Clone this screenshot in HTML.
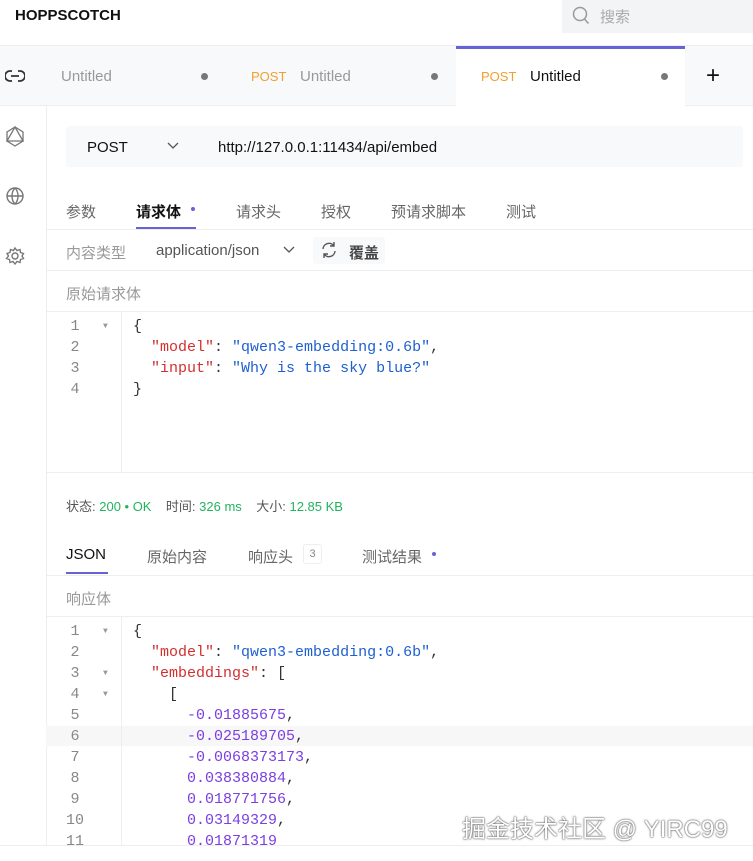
<!DOCTYPE html>
<html><head><meta charset="utf-8"><style>
*{box-sizing:border-box;margin:0;padding:0}
body{width:753px;height:861px;overflow:hidden;background:#fff;font-family:"Liberation Sans","Noto Sans CJK SC",sans-serif;color:#333;position:relative}
.a{position:absolute}
.mono{font-family:"Liberation Mono","DejaVu Sans Mono",monospace;font-size:15px}
.ln{position:absolute;left:46px;width:76px;text-align:center;color:#888;font-size:15px;padding-right:18px}
.code{position:absolute;left:133px;white-space:pre}
.k{color:#d32f2f}.s{color:#1e60d0}.n{color:#7b3fe0}
.arr{position:absolute;left:103px;font-size:8px;color:#999}
</style></head><body>
<div class="a" style="left:15px;top:7px;font-weight:bold;font-size:15px;color:#111">HOPPSCOTCH</div>
<div class="a" style="left:562px;top:0;width:191px;height:33px;background:#f3f4f6"></div>
<svg class="a" style="left:571px;top:6px" width="20" height="20" viewBox="0 0 20 20"><circle cx="9" cy="8" r="6.5" fill="none" stroke="#999" stroke-width="1.5"/><path d="M13.5 13l4 4.5" stroke="#999" stroke-width="1.5"/></svg>
<div class="a" style="left:600px;top:6px;font-size:15px;color:#aaa">搜索</div>
<div class="a" style="left:0;top:45px;width:753px;height:1px;background:#eee"></div>
<div class="a" style="left:0;top:46px;width:753px;height:60px;background:#f8f9fa"></div>
<div class="a" style="left:46px;top:106px;width:1px;height:755px;background:#eee"></div>
<div class="a" style="left:0;top:105px;width:753px;height:1px;background:#eee"></div>
<div class="a" style="left:456px;top:46px;width:229px;height:60px;background:#fff"></div>
<div class="a" style="left:456px;top:46px;width:229px;height:3px;background:#6663d6"></div>
<svg class="a" style="left:5px;top:67px" width="20" height="18" viewBox="0 0 20 18"><path d="M7 4H5a5 5 0 0 0 0 10h2M13 4h2a5 5 0 0 1 0 10h-2M6 9h8" fill="none" stroke="#333" stroke-width="1.8"/></svg>
<div class="a" style="left:61px;top:68px;font-size:15px;color:#999">Untitled</div>
<div class="a" style="left:201px;top:73px;width:7px;height:7px;border-radius:50%;background:#777"></div>
<div class="a" style="left:251px;top:69px;font-size:13px;color:#f0a030">POST</div>
<div class="a" style="left:300px;top:68px;font-size:15px;color:#999">Untitled</div>
<div class="a" style="left:431px;top:73px;width:7px;height:7px;border-radius:50%;background:#777"></div>
<div class="a" style="left:481px;top:69px;font-size:13px;color:#f0a030">POST</div>
<div class="a" style="left:530px;top:68px;font-size:15px;color:#111">Untitled</div>
<div class="a" style="left:661px;top:73px;width:7px;height:7px;border-radius:50%;background:#777"></div>
<div class="a" style="left:706px;top:62px;font-size:24px;color:#111">+</div>
<svg class="a" style="left:4px;top:125px" width="22" height="22" viewBox="0 0 22 22" fill="none" stroke="#777" stroke-width="1.3"><path d="M11 2L19 16H3Z"/><path d="M11 2L3 7v9l8 5 8-5V7z"/></svg>
<svg class="a" style="left:4px;top:185px" width="22" height="22" viewBox="0 0 22 22" fill="none" stroke="#777" stroke-width="1.4"><circle cx="11" cy="11" r="8"/><path d="M3 11h16M11 3c-4 4-4 12 0 16M11 3c4 4 4 12 0 16"/></svg>
<svg class="a" style="left:4px;top:245px" width="22" height="22" viewBox="0 0 22 22" fill="none" stroke="#777" stroke-width="1.4"><circle cx="11" cy="11" r="3"/><path d="M11 3l2 2.5 3-1 .5 3 3 1-1.5 2.5 1.5 2.5-3 1-.5 3-3-1-2 2.5-2-2.5-3 1-.5-3-3-1L4.5 11 3 8.5l3-1 .5-3 3 1z"/></svg>
<div class="a" style="left:66px;top:126px;width:677px;height:41px;background:#f8f9fa;border-radius:3px"></div>
<div class="a" style="left:87px;top:139px;font-size:15px;color:#111">POST</div>
<svg class="a" style="left:166px;top:141px" width="14" height="10"><path d="M2 2l5 5 5-5" fill="none" stroke="#555" stroke-width="1.3"/></svg>
<div class="a" style="left:218px;top:139px;font-size:15px;color:#111">http://127.0.0.1:11434/api/embed</div>
<div class="a" style="left:66px;top:201px;font-size:15px;color:#666">参数</div>
<div class="a" style="left:136px;top:201px;font-size:15px;color:#111;font-weight:bold">请求体</div>
<div class="a" style="left:191px;top:207px;width:4px;height:4px;border-radius:50%;background:#6663d6"></div>
<div class="a" style="left:136px;top:227px;width:60px;height:2px;background:#6663d6"></div>
<div class="a" style="left:236px;top:201px;font-size:15px;color:#666">请求头</div>
<div class="a" style="left:321px;top:201px;font-size:15px;color:#666">授权</div>
<div class="a" style="left:391px;top:201px;font-size:15px;color:#666">预请求脚本</div>
<div class="a" style="left:506px;top:201px;font-size:15px;color:#666">测试</div>
<div class="a" style="left:47px;top:229px;width:706px;height:1px;background:#eee"></div>
<div class="a" style="left:66px;top:242px;font-size:15px;color:#999">内容类型</div>
<div class="a" style="left:156px;top:242px;font-size:15px;color:#555">application/json</div>
<svg class="a" style="left:283px;top:245px" width="12" height="10"><path d="M1 2l5 5 5-5" fill="none" stroke="#555" stroke-width="1.3"/></svg>
<div class="a" style="left:313px;top:237px;width:72px;height:27px;background:#f8f9fa;border-radius:3px"></div>
<svg class="a" style="left:319px;top:240px" width="20" height="20" viewBox="0 0 20 20" fill="none" stroke="#555" stroke-width="1.4"><path d="M4 9a6 6 0 0 1 11-3M16 11a6 6 0 0 1-11 3M15 2v4h-4M5 18v-4h4"/></svg>
<div class="a" style="left:349px;top:242px;font-size:15px;color:#444;font-weight:bold">覆盖</div>
<div class="a" style="left:47px;top:270px;width:706px;height:1px;background:#eee"></div>
<div class="a" style="left:66px;top:283px;font-size:15px;color:#999">原始请求体</div>
<div class="a" style="left:47px;top:311px;width:706px;height:1px;background:#eee"></div>
<div class="a" style="left:121px;top:312px;width:1px;height:160px;background:#eee"></div>
<div class="a" style="left:47px;top:472px;width:706px;height:1px;background:#eee"></div>
<div class="mono">
<div class="ln" style="top:318px">1</div><div class="arr" style="top:322px">▼</div>
<div class="ln" style="top:339px">2</div><div class="ln" style="top:360px">3</div><div class="ln" style="top:381px">4</div>
<div class="code" style="top:318px">{</div>
<div class="code" style="top:339px">  <span class="k">"model"</span>: <span class="s">"qwen3-embedding:0.6b"</span>,</div>
<div class="code" style="top:360px">  <span class="k">"input"</span>: <span class="s">"Why is the sky blue?"</span></div>
<div class="code" style="top:381px">}</div>
</div>
<div class="a" style="left:66px;top:496px;font-size:13px;color:#555">状态: <span style="color:#22b35e">200 • OK</span>&nbsp;&nbsp;&nbsp;&nbsp;时间: <span style="color:#22b35e">326 ms</span>&nbsp;&nbsp;&nbsp;&nbsp;大小: <span style="color:#22b35e">12.85 KB</span></div>
<div class="a" style="left:66px;top:546px;font-size:15px;color:#111">JSON</div>
<div class="a" style="left:66px;top:572px;width:42px;height:2px;background:#6663d6"></div>
<div class="a" style="left:147px;top:546px;font-size:15px;color:#666">原始内容</div>
<div class="a" style="left:248px;top:546px;font-size:15px;color:#666">响应头</div>
<div class="a" style="left:303px;top:544px;width:19px;height:20px;border:1px solid #eee;border-radius:3px;font-size:11px;color:#888;text-align:center;line-height:18px">3</div>
<div class="a" style="left:362px;top:546px;font-size:15px;color:#666">测试结果</div>
<div class="a" style="left:432px;top:552px;width:4px;height:4px;border-radius:50%;background:#6663d6"></div>
<div class="a" style="left:47px;top:575px;width:706px;height:1px;background:#eee"></div>
<div class="a" style="left:66px;top:588px;font-size:15px;color:#999">响应体</div>
<div class="a" style="left:47px;top:616px;width:706px;height:1px;background:#eee"></div>
<div class="a" style="left:46px;top:726px;width:707px;height:20px;background:#f7f7f8"></div>
<div class="a" style="left:121px;top:617px;width:1px;height:228px;background:#eee"></div>
<div class="mono">
<div class="ln" style="top:623px">1</div><div class="arr" style="top:627px">▼</div>
<div class="ln" style="top:644px">2</div>
<div class="ln" style="top:665px">3</div><div class="arr" style="top:669px">▼</div>
<div class="ln" style="top:686px">4</div><div class="arr" style="top:690px">▼</div>
<div class="ln" style="top:707px">5</div><div class="ln" style="top:728px">6</div><div class="ln" style="top:749px">7</div><div class="ln" style="top:770px">8</div><div class="ln" style="top:791px">9</div><div class="ln" style="top:812px">10</div><div class="ln" style="top:833px">11</div>
<div class="code" style="top:623px">{</div>
<div class="code" style="top:644px">  <span class="k">"model"</span>: <span class="s">"qwen3-embedding:0.6b"</span>,</div>
<div class="code" style="top:665px">  <span class="k">"embeddings"</span>: [</div>
<div class="code" style="top:686px">    [</div>
<div class="code" style="top:707px">      <span class="n">-0.01885675</span>,</div>
<div class="code" style="top:728px">      <span class="n">-0.025189705</span>,</div>
<div class="code" style="top:749px">      <span class="n">-0.0068373173</span>,</div>
<div class="code" style="top:770px">      <span class="n">0.038380884</span>,</div>
<div class="code" style="top:791px">      <span class="n">0.018771756</span>,</div>
<div class="code" style="top:812px">      <span class="n">0.03149329</span>,</div>
<div class="code" style="top:833px">      <span class="n">0.01871319</span></div>
</div>
<div class="a" style="left:0;top:845px;width:753px;height:16px;background:#fff;border-top:1px solid #eee"></div>
<div class="a" style="left:462px;top:809px;font-size:24px;color:#fff;text-shadow:0 0 2px #555,0 0 1px #333">掘金技术社区 @ YIRC99</div>
</body></html>
